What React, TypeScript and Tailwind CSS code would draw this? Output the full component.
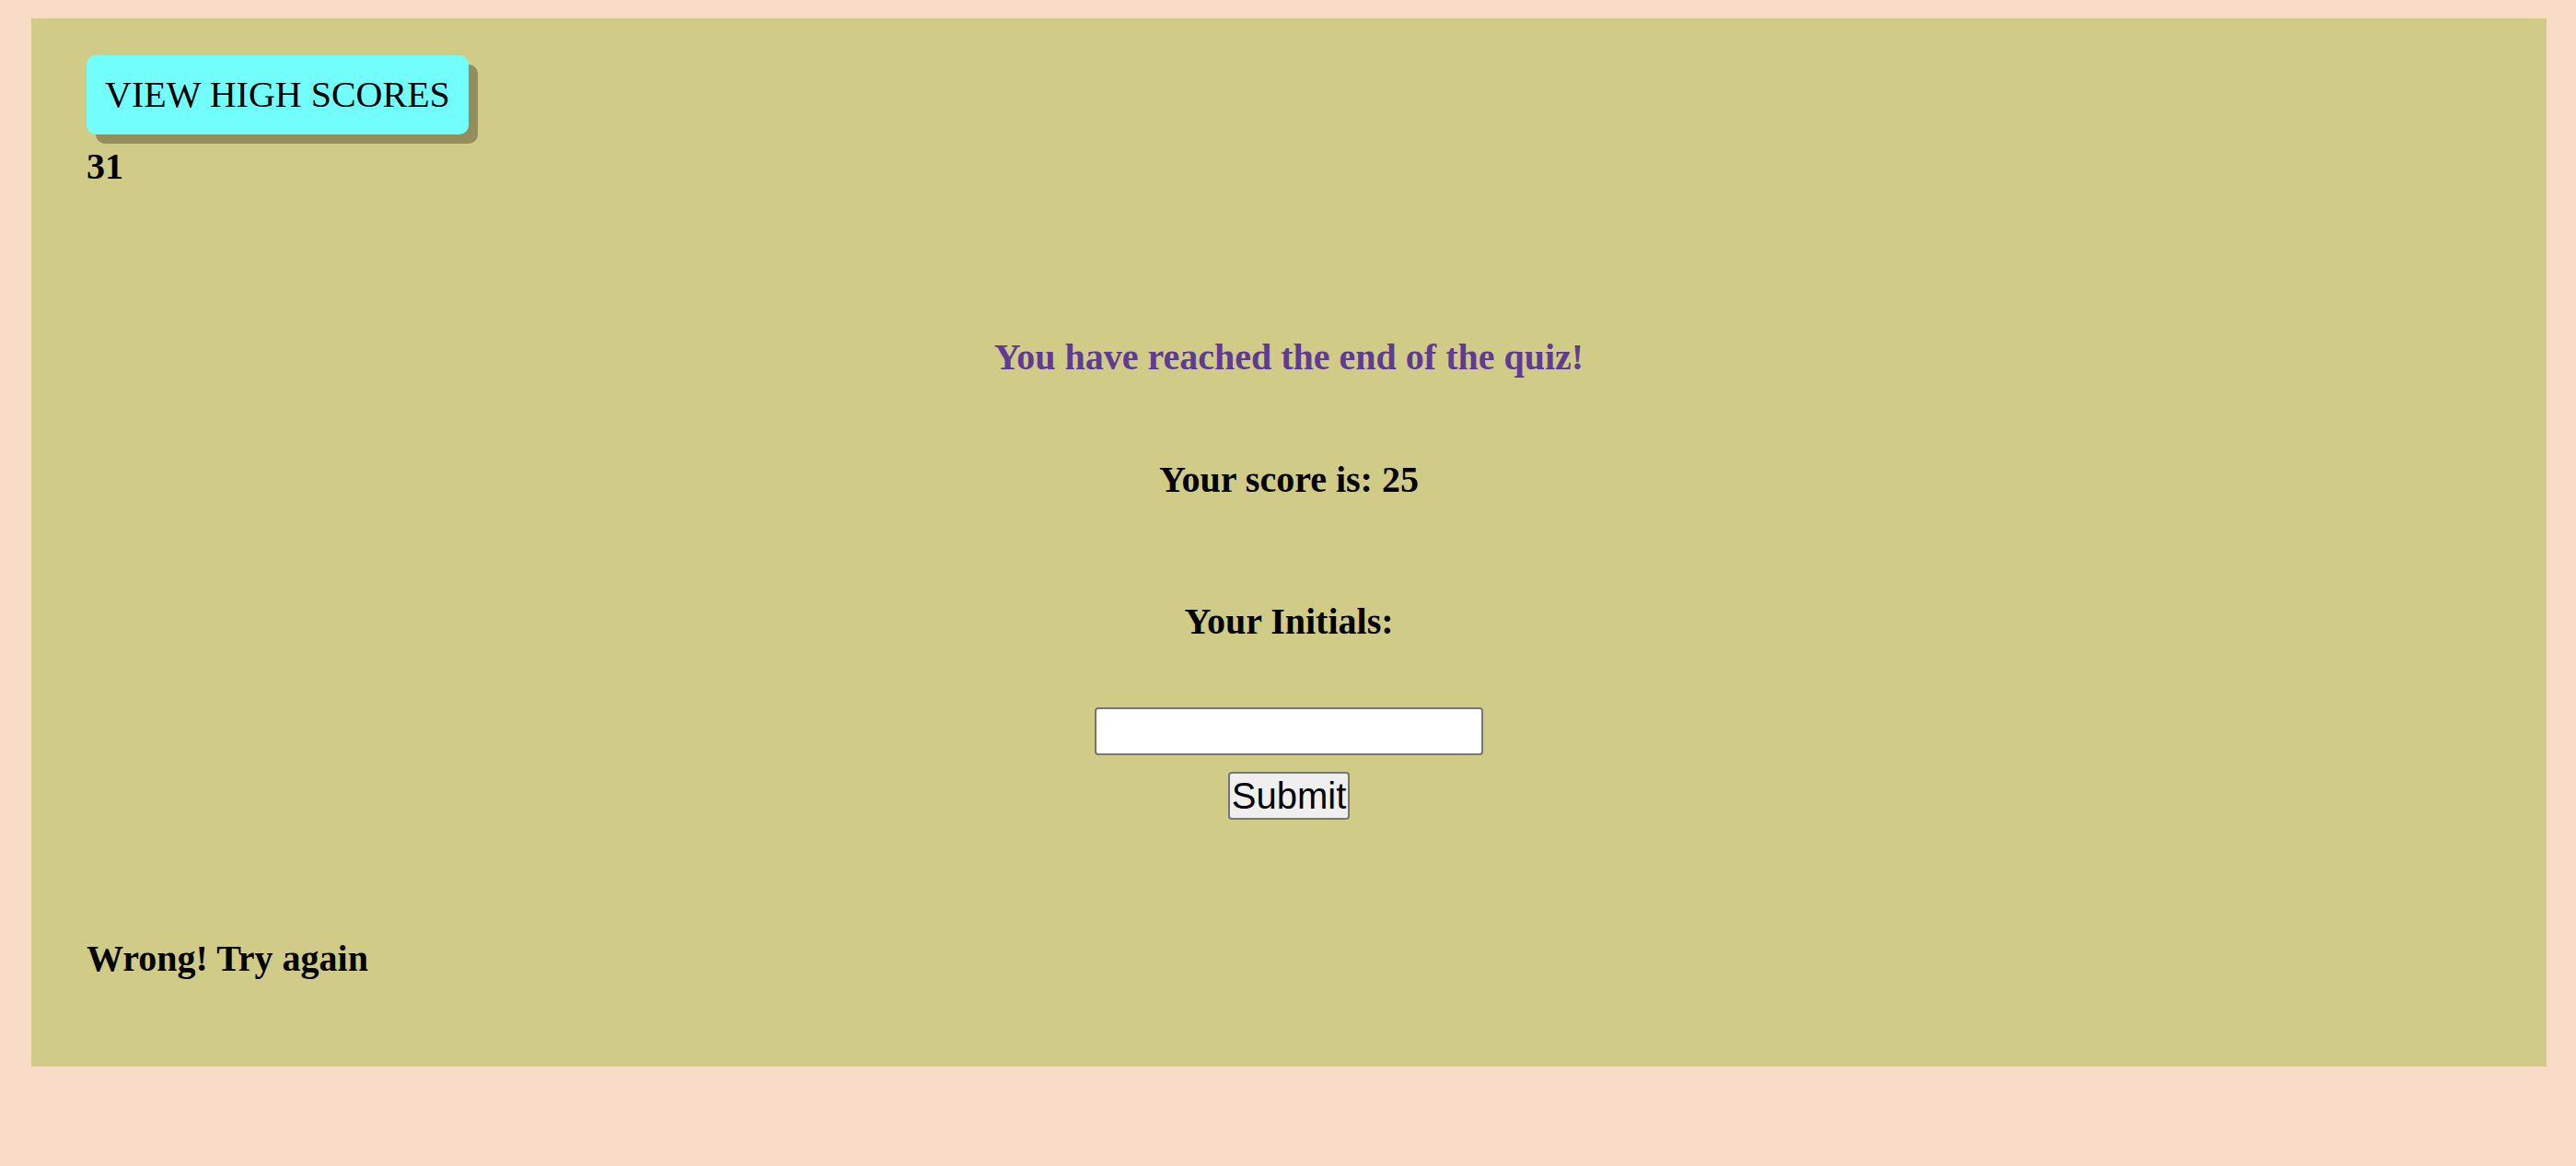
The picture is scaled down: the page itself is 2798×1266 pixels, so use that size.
import React from "react";

export default function App() {
  return (
    <div className="h-[1266px] overflow-hidden w-full bg-[#f8dcc7] pt-[20px] pl-[34px] pr-[32px] font-['Liberation_Serif',serif] text-black">
      <div className="bg-[#d0cc87] h-[1138px] pl-[60px] pr-[60px] pt-[40px]">
        <div className="flex">
          <button className="h-[86px] px-[20px] rounded-[10px] bg-[#72fffc] shadow-[10px_10px_0_#948d5c] text-[40px] leading-[46px] font-['Liberation_Serif',serif] text-black">
            VIEW HIGH SCORES
          </button>
        </div>
        <div className="mt-[12px] text-[40px] leading-[46px] font-bold">31</div>
        <div className="flex flex-col items-center">
          <div className="mt-[161px] text-[40px] leading-[46px] font-bold text-[#5f3b95]">
            You have reached the end of the quiz!
          </div>
          <div className="mt-[87px] text-[40px] leading-[46px] font-bold">Your score is: 25</div>
          <div className="mt-[108px] text-[40px] leading-[46px] font-bold">Your Initials:</div>
          <input
            type="text"
            className="mt-[70px] w-[422px] h-[52px] bg-white border-2 border-[#767676] rounded-[4px] outline-none"
          />
          <button className="mt-[18px] h-[52px] px-[2px] py-[1px] border-2 border-[#767676] rounded-[4px] bg-[#efefef] font-['Liberation_Sans',sans-serif] text-[40px] leading-[46px] text-black">
            Submit
          </button>
        </div>
        <div className="mt-[128px] text-[40px] leading-[46px] font-bold">Wrong! Try again</div>
      </div>
    </div>
  );
}
